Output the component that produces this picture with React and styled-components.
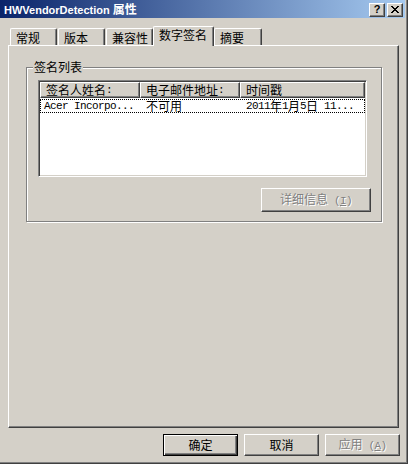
import React from 'react';
import styled, { createGlobalStyle } from 'styled-components';

const GlobalStyle = createGlobalStyle`
  html, body { margin: 0; padding: 0; background: #D4D0C8; }
  body {
    font-family: "Noto Sans CJK SC", "Liberation Sans", sans-serif;
    font-size: 12px;
    color: #000;
  }
`;

const Window = styled.div`
  width: 408px;
  height: 464px;
  box-sizing: border-box;
  padding: 0 3px 2px 0;
  background: #D4D0C8;
  box-shadow: inset -1px -1px 0 #404040, inset -2px -2px 0 #808080;
  display: flex;
  flex-direction: column;
`;

const TitleBar = styled.div`
  height: 18px;
  flex: none;
  display: flex;
  align-items: center;
  padding: 0 2px 0 4px;
  background: linear-gradient(to right, #0A246A, #A6CAF0);
  color: #fff;
`;

const Title = styled.div`
  flex: 1;
  font-family: "Liberation Sans", "Noto Sans CJK SC", sans-serif;
  font-weight: bold;
  font-size: 11px;
  line-height: 14px;
  white-space: pre;
`;

const TitleCjk = styled.span`
  font-family: "Noto Sans CJK SC", sans-serif;
  font-size: 12px;
`;

const CaptionButton = styled.div`
  width: 16px;
  height: 14px;
  box-sizing: border-box;
  margin: 1px 0 0 2px;
  background: #D4D0C8;
  border: 1px solid;
  border-color: #fff #404040 #404040 #fff;
  box-shadow: inset -1px -1px 0 #808080;
  display: flex;
  align-items: center;
  justify-content: center;
  color: #000;
  font-family: "Liberation Sans", sans-serif;
  font-weight: bold;
  font-size: 11px;
  line-height: 11px;
`;

const TabRow = styled.div`
  display: flex;
  align-items: flex-end;
  gap: 1px;
  height: 20px;
  margin: 8px 0 -1px 10px;
  position: relative;
  z-index: 1;
`;

const Tab = styled.div`
  box-sizing: border-box;
  width: ${p => p.$w}px;
  height: ${p => (p.$active ? 20 : 17)}px;
  margin: ${p => (p.$active ? '0 -1px' : '0 0 1px 0')};
  padding: ${p => (p.$active ? '2px 0 0 5px' : '3px 0 0 5px')};
  background: #D4D0C8;
  border-top: 1px solid #fff;
  border-left: 1px solid #fff;
  border-right: 1px solid #404040;
  border-top-left-radius: 2px;
  border-top-right-radius: 2px;
  box-shadow: inset -1px 0 0 #808080;
  line-height: 12px;
  white-space: nowrap;
`;

const Panel = styled.div`
  box-sizing: border-box;
  margin-left: 8px;
  width: 391px;
  height: 383px;
  flex: none;
  padding: 21px 0 0 17px;
  border: 1px solid;
  border-color: #fff #404040 #404040 #fff;
  box-shadow: inset -1px -1px 0 #808080;
`;

const Group = styled.div`
  position: relative;
  box-sizing: border-box;
  width: 356px;
  height: 155px;
  padding: 12px 10px 0 11px;
  border: 1px solid #808080;
  box-shadow: inset 1px 1px 0 #fff, 1px 1px 0 #fff;
  display: flex;
  flex-direction: column;
`;

const GroupLabel = styled.div`
  position: absolute;
  top: -7px;
  left: 6px;
  padding: 0 1px;
  background: #D4D0C8;
  line-height: 12px;
`;

const ListView = styled.div`
  box-sizing: border-box;
  width: 329px;
  height: 97px;
  flex: none;
  padding: 1px;
  background: #fff;
  border: 1px solid;
  border-color: #808080 #fff #fff #808080;
  box-shadow: inset 1px 1px 0 #404040, inset -1px -1px 0 #D4D0C8;
`;

const Header = styled.div`
  display: flex;
  height: 16px;
`;

const HeaderCell = styled.div`
  box-sizing: border-box;
  width: ${p => (p.$w ? `${p.$w}px` : 'auto')};
  flex: ${p => (p.$w ? 'none' : '1')};
  padding-left: 5px;
  background: #D4D0C8;
  border: 1px solid;
  border-color: #fff #404040 #404040 #fff;
  box-shadow: inset -1px -1px 0 #808080;
  display: flex;
  align-items: center;
  line-height: 12px;
  white-space: pre;
`;

const Row = styled.div`
  box-sizing: border-box;
  display: flex;
  height: 14px;
  margin-top: 1px;
  border: 1px dotted #000;
`;

const Cell = styled.div`
  box-sizing: border-box;
  width: ${p => (p.$w ? `${p.$w}px` : 'auto')};
  flex: ${p => (p.$w ? 'none' : '1')};
  padding-left: ${p => p.$pad}px;
  display: flex;
  align-items: center;
  line-height: 12px;
  white-space: pre;
`;

const Latin = styled.span`
  font-family: "Liberation Mono", monospace;
  font-size: 11px;
  letter-spacing: -0.6px;
  white-space: pre;
`;

const Button = styled.button`
  appearance: none;
  box-sizing: border-box;
  width: ${p => p.$w}px;
  height: ${p => p.$h}px;
  margin: 0;
  padding: 0;
  background: #D4D0C8;
  font-family: "Noto Sans CJK SC", "Liberation Sans", sans-serif;
  font-size: 12px;
  line-height: 12px;
  color: #000;
  border: 1px solid;
  border-color: ${p => (p.$default ? '#000' : '#fff #404040 #404040 #fff')};
  box-shadow: ${p =>
    p.$default
      ? 'inset 1px 1px 0 #fff, inset -1px -1px 0 #404040, inset -2px -2px 0 #808080'
      : 'inset -1px -1px 0 #808080'};
  &:disabled {
    color: #808080;
    text-shadow: 1px 1px 0 #fff;
  }
`;

const DetailsButton = styled(Button)`
  align-self: flex-end;
  margin-top: 11px;
`;

const ButtonRow = styled.div`
  display: flex;
  justify-content: flex-end;
  gap: 6px;
  margin-top: 6px;
  padding-right: 5px;
`;

function Txt({ text }) {
  return text
    .split(/([\x20-\x7e]+)/)
    .filter(Boolean)
    .map((part, i) =>
      /^[\x20-\x7e]+$/.test(part) ? <Latin key={i}>{part}</Latin> : <span key={i}>{part}</span>
    );
}

function CloseGlyph() {
  const px = [
    [0, 0], [1, 0], [6, 0], [7, 0],
    [1, 1], [2, 1], [5, 1], [6, 1],
    [2, 2], [3, 2], [4, 2], [5, 2],
    [3, 3], [4, 3],
    [2, 4], [3, 4], [4, 4], [5, 4],
    [1, 5], [2, 5], [5, 5], [6, 5],
    [0, 6], [1, 6], [6, 6], [7, 6],
  ];
  return (
    <svg width="8" height="7" viewBox="0 0 8 7" shapeRendering="crispEdges">
      {px.map(([x, y]) => <rect key={`${x}-${y}`} x={x} y={y} width="1" height="1" fill="#000" />)}
    </svg>
  );
}

const tabs = [
  { label: '常规', w: 47 },
  { label: '版本', w: 47 },
  { label: '兼容性', w: 47 },
  { label: '数字签名', w: 61, active: true },
  { label: '摘要', w: 48 },
];

export default function App() {
  return (
    <>
      <GlobalStyle />
      <Window>
        <TitleBar>
          <Title>HWVendorDetection <TitleCjk>属性</TitleCjk></Title>
          <CaptionButton>?</CaptionButton>
          <CaptionButton><CloseGlyph /></CaptionButton>
        </TitleBar>

        <TabRow>
          {tabs.map(t => (
            <Tab key={t.label} $w={t.w} $active={t.active}>{t.label}</Tab>
          ))}
        </TabRow>

        <Panel>
          <Group>
            <GroupLabel>签名列表</GroupLabel>
            <ListView>
              <Header>
                <HeaderCell $w={100}><Txt text="签名人姓名:" /></HeaderCell>
                <HeaderCell $w={100}><Txt text="电子邮件地址:" /></HeaderCell>
                <HeaderCell><Txt text="时间戳" /></HeaderCell>
              </Header>
              <Row>
                <Cell $w={99} $pad={3}><Txt text="Acer Incorpo..." /></Cell>
                <Cell $w={100} $pad={6}><Txt text="不可用" /></Cell>
                <Cell $pad={6}><Txt text="2011年1月5日 11..." /></Cell>
              </Row>
            </ListView>
            <DetailsButton $w={110} $h={24} disabled>
              详细信息<Latin> (<u>I</u>)</Latin>
            </DetailsButton>
          </Group>
        </Panel>

        <ButtonRow>
          <Button $w={75} $h={22} $default>确定</Button>
          <Button $w={75} $h={22}>取消</Button>
          <Button $w={75} $h={22} disabled>
            应用<Latin> (<u>A</u>)</Latin>
          </Button>
        </ButtonRow>
      </Window>
    </>
  );
}
